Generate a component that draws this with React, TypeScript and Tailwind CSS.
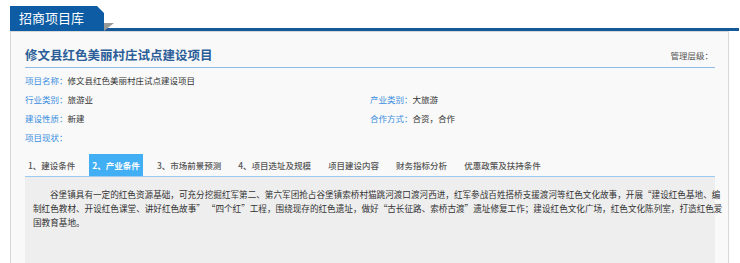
import React from "react";

const rows: [string, string, string?, string?][] = [
  ["项目名称：", "修文县红色美丽村庄试点建设项目"],
  ["行业类别：", "旅游业", "产业类别：", "大旅游"],
  ["建设性质：", "新建", "合作方式：", "合资，合作"],
  ["项目现状：", ""],
];

const tabs = [
  "1、建设条件",
  "2、产业条件",
  "3、市场前景预测",
  "4、项目选址及规模",
  "项目建设内容",
  "财务指标分析",
  "优惠政策及扶持条件",
];

export default function App() {
  return (
    <div className="w-[740px] h-[263px] bg-white overflow-hidden font-['Noto_Sans_CJK_SC','Noto_Sans',sans-serif]">
      {/* header */}
      <div className="pt-[6px] pl-[10px] flex items-end">
        <div className="w-[94px] h-[25px] bg-[#0d5ca4] text-white text-[13px] leading-[24px] pl-[9px] [clip-path:polygon(0_0,87px_0,100%_7px,100%_100%,0_100%)]">
          招商项目库
        </div>
        <svg width="10" height="8" viewBox="0 0 10 8" className="block">
          <rect x="0" y="5" width="10" height="3" fill="#15599b" />
          <polygon points="0,0 10,0 0,8" fill="#9a9a9a" />
        </svg>
        <div className="w-[625px] h-[3px] bg-[#15599b]" />
      </div>

      {/* panel */}
      <div className="ml-[10px] w-[719px] h-[232px] bg-[#f9f9f9] border-l border-r border-t border-[#d8d8d8] pl-[14px] pr-[13px]">
        <div className="h-[36px] flex items-end justify-between pb-[4px] border-b border-[#8dbce9]">
          <div className="text-[12.5px] leading-[17px] font-bold text-[#2b5e98]">修文县红色美丽村庄试点建设项目</div>
          <div className="text-[8.5px] leading-[16px] text-[#555] pr-[2px]">管理层级：</div>
        </div>

        <div className="mt-[3px]">
          {rows.map((r, i) => (
            <div key={i} className="grid grid-cols-[345px_1fr] h-[19px] leading-[19px] text-[8.5px]">
              <div>
                <span className="text-[#3a8ee0]">{r[0]}</span>
                <span className="text-[#333]">{r[1]}</span>
              </div>
              {r[2] ? (
                <div>
                  <span className="text-[#3a8ee0]">{r[2]}</span>
                  <span className="text-[#333]">{r[3]}</span>
                </div>
              ) : (
                <div />
              )}
            </div>
          ))}
        </div>

        <div className="mt-[7px] flex gap-[11px] border-b border-[#9ccaf0]">
          {tabs.map((t, i) => (
            <div
              key={t}
              className={
                i === 1
                  ? "h-[22px] leading-[22px] px-[3px] text-[8.5px] bg-[#42aef4] text-white font-bold"
                  : "h-[22px] leading-[22px] px-[3px] text-[8.5px] text-[#555] font-medium"
              }
            >
              {t}
            </div>
          ))}
        </div>

        <div className="bg-[#eeeeee] h-[100px] pt-[10px] px-[8px] text-[8.6px] leading-[14px] text-[#333] whitespace-nowrap">
          <div className="indent-[17px]">
            谷堡镇具有一定的红色资源基础，可充分挖掘红军第二、第六军团抢占谷堡镇索桥村猫跳河渡口渡河西进，红军参战百姓搭桥支援渡河等红色文化故事，开展“建设红色基地、编
          </div>
          <div>
            制红色教材、开设红色课堂、讲好红色故事” “四个红”工程，围绕现存的红色遗址，做好“古长征路、索桥古渡”遗址修复工作；建设红色文化广场，红色文化陈列室，打造红色爱
          </div>
          <div>国教育基地。</div>
        </div>
      </div>
    </div>
  );
}
